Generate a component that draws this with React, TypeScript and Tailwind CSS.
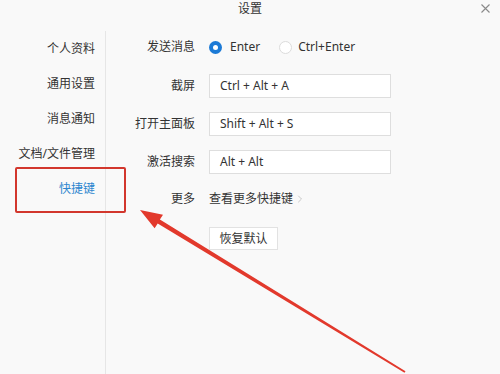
import { ChevronRight } from 'lucide-react'

const FONT = "font-['Noto_Sans','Noto_Sans_CJK_SC',sans-serif]"

const navItems = ['个人资料', '通用设置', '消息通知', '文档/文件管理', '快捷键']

const shortcuts = [
  { label: '截屏', value: 'Ctrl + Alt + A' },
  { label: '打开主面板', value: 'Shift + Alt + S' },
  { label: '激活搜索', value: 'Alt + Alt' },
]

function Row({ label, className, children }: { label: string; className?: string; children: React.ReactNode }) {
  return (
    <div className={`flex h-[24px] items-center ${className ?? ''}`}>
      <div className="w-[90px] pr-[1px] text-right">{label}</div>
      <div className="ml-[13px] flex flex-1 items-center">{children}</div>
    </div>
  )
}

export default function App() {
  return (
    <div className={`relative h-[374px] w-[500px] overflow-hidden bg-[#f9f9f9] text-[12px] text-[#333] ${FONT}`}>
      {/* TITLE BAR */}
      <div className="relative flex h-[31px] justify-center">
        <span className="text-[12px] leading-[18px] text-[#333]">设置</span>
        <svg className="absolute left-[481px] top-[4px]" width="9" height="9" viewBox="0 0 9 9">
          <path d="M0.5 0.5 L8.5 8.5 M8.5 0.5 L0.5 8.5" stroke="#8a8a8a" strokeWidth="1.1" />
        </svg>
      </div>

      <div className="flex h-[343px]">
        {/* SIDEBAR */}
        <div className="w-[106px] border-r border-[#e6e6e6]">
          {navItems.map((item, i) => (
            <div
              key={item}
              className={`flex h-[35px] items-center justify-end pr-[10px] ${i === 4 ? 'text-[#2d86cf]' : ''}`}
            >
              {item}
            </div>
          ))}
        </div>

        {/* CONTENT */}
        <div className="flex flex-1 flex-col">
          <Row label="发送消息" className="mt-[4px]">
            <span className="flex h-[13px] w-[13px] items-center justify-center rounded-full bg-[#1c7ad6]">
              <span className="h-[5px] w-[5px] rounded-full bg-white" />
            </span>
            <span className="ml-[8px]">Enter</span>
            <span className="ml-[19px] h-[13px] w-[13px] rounded-full border border-[#dcdcdc] bg-white" />
            <span className="ml-[6px]">Ctrl+Enter</span>
          </Row>

          {shortcuts.map((s, i) => (
            <Row key={s.label} label={s.label} className={i === 0 ? 'mt-[15px]' : 'mt-[14px]'}>
              <div className="flex h-[24px] w-[182px] items-center border border-[#dedede] bg-white pl-[10px]">
                {s.value}
              </div>
            </Row>
          ))}

          <Row label="更多" className="mt-[13px]">
            <span>查看更多快捷键</span>
            <ChevronRight size={12} strokeWidth={1.5} className="ml-[1px] text-[#b8b8b8]" />
          </Row>

          <div className="ml-[103px] mt-[16px]">
            <button className="h-[23px] w-[69px] border border-[#e2e2e2] bg-white text-[12px] text-[#333]">
              恢复默认
            </button>
          </div>
        </div>
      </div>

      {/* ANNOTATION: red highlight box */}
      <div className="absolute left-[15px] top-[167px] h-[46px] w-[111px] rounded-[2px] border-2 border-[#d2372d]" />

      {/* ANNOTATION: red arrow */}
      <svg className="absolute left-0 top-0" width="500" height="374" viewBox="0 0 500 374">
        <polygon
          points="140,210 163,214.7 159.9,219.6 405.5,371.2 404.5,372.8 157.7,223.4 154.6,228.3"
          fill="#e2392c"
        />
      </svg>
    </div>
  )
}
